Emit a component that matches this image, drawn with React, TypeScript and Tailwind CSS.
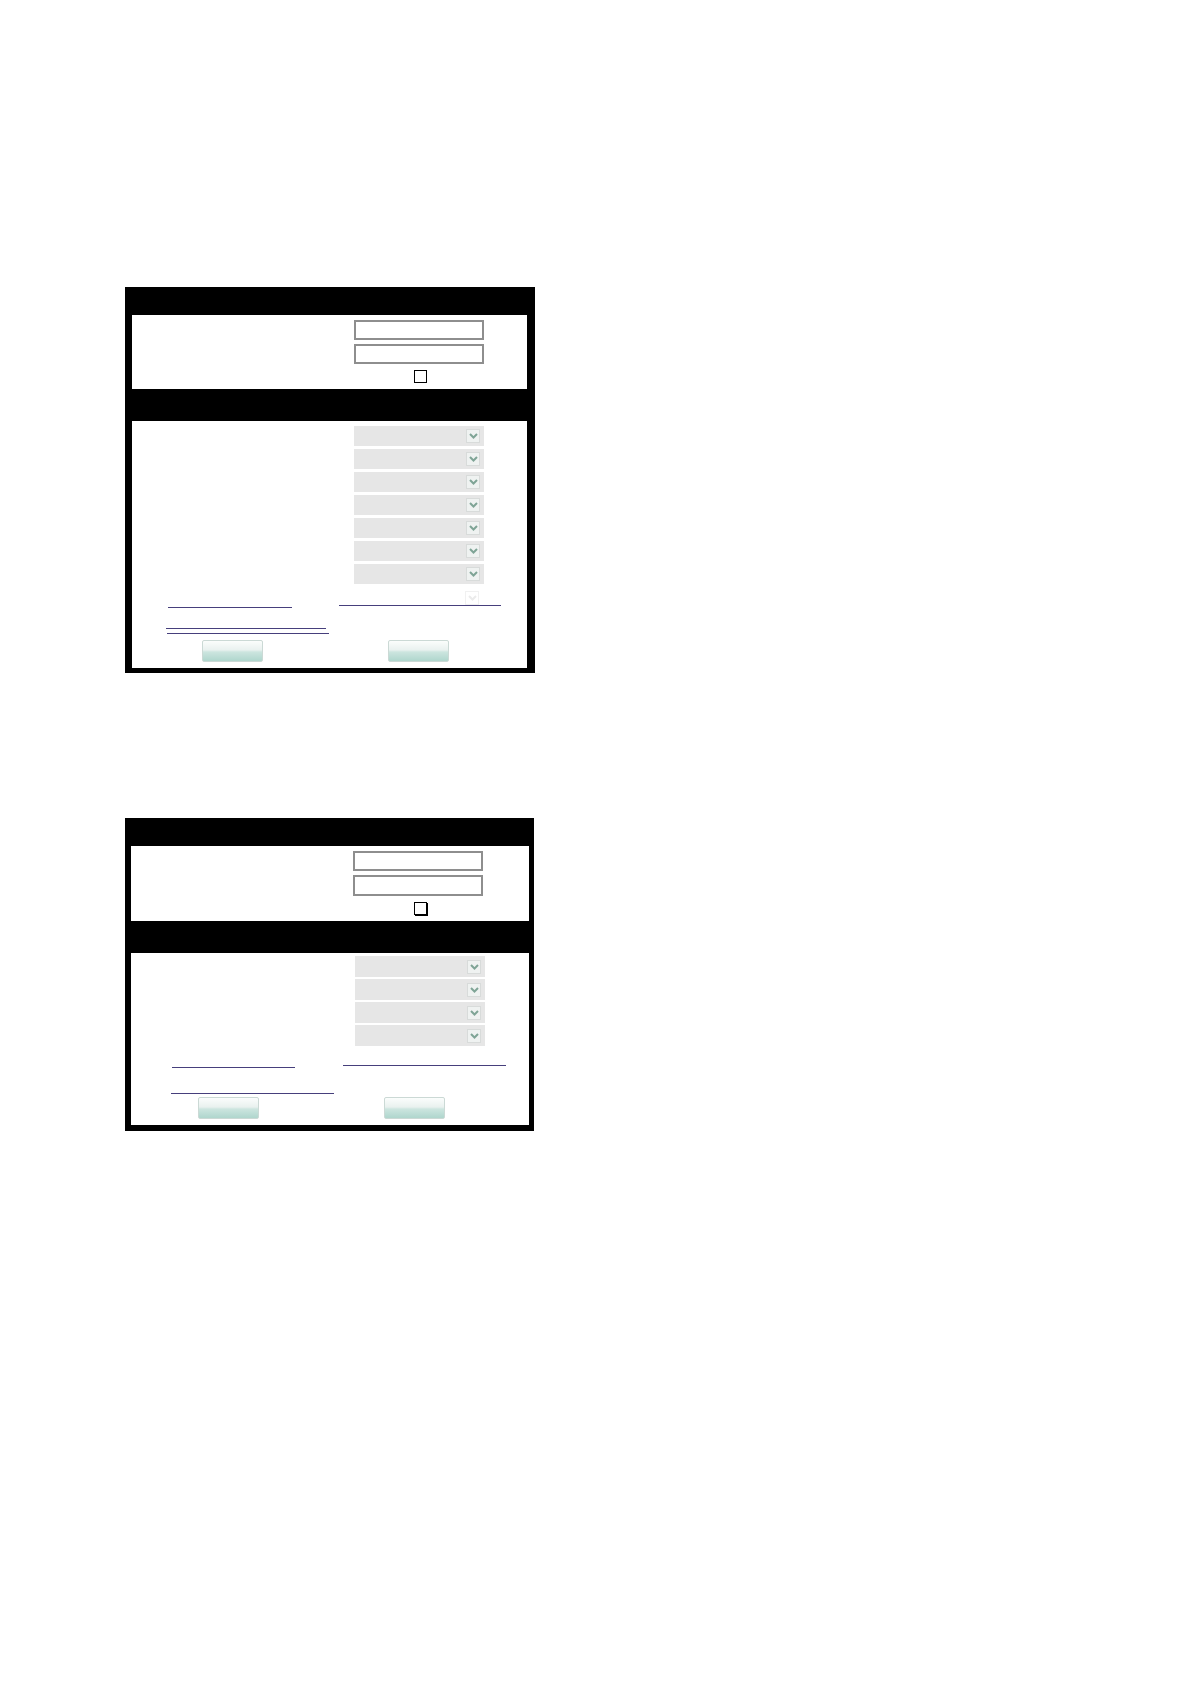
import React from 'react';

// Blank login / preferences form, drawn twice on a white page.
// Labels are empty in the source, so only the controls and link underlines show.

const TextBox: React.FC<{ tall?: boolean }> = ({ tall }) => (
  <div
    className={`w-[130px] ${tall ? 'h-[21px]' : 'h-[20px]'} border-2 border-[#8e8e8e] bg-white`}
  />
);

const Chevron: React.FC<{ faint?: boolean }> = ({ faint }) => (
  <div
    className={`flex h-[14px] w-[14px] items-center justify-center border ${
      faint ? 'border-[#f1f1f1] bg-white' : 'border-[#d8dbda] bg-[#eff2f1]'
    }`}
  >
    <svg width="9" height="6" viewBox="0 0 9 6">
      <path
        d="M1 1 L4.5 4.5 L8 1"
        fill="none"
        stroke={faint ? '#ebebeb' : '#7fa496'}
        strokeWidth="2"
      />
    </svg>
  </div>
);

const Select: React.FC<{ h: string }> = ({ h }) => (
  <div className={`flex w-[130px] ${h} items-center justify-end bg-[#e6e6e6] pr-[4px]`}>
    <Chevron />
  </div>
);

const Line: React.FC<{ w: string; className?: string }> = ({ w, className = '' }) => (
  <div className={`h-px ${w} bg-[#463f7c] ${className}`} />
);

const Button: React.FC = () => (
  <button
    type="button"
    className="h-[22px] w-[61px] rounded-[2px] border border-[#cbd9d5] bg-[linear-gradient(to_bottom,#fbfdfc_0%,#e9f1ef_45%,#cce5df_55%,#afd6cd_100%)]"
  />
);

const Header: React.FC<{ h: string }> = ({ h }) => <div className={`${h} bg-black`} />;

const FirstPanel: React.FC = () => (
  <div className="w-[410px] bg-black pl-[7px] pr-[8px] pb-[5px]">
    <Header h="h-[28px]" />
    <div className="flex flex-col bg-white pt-[5px] pb-[6px] pl-[222px]">
      <TextBox />
      <div className="mt-[4px]">
        <TextBox />
      </div>
      <div className="mt-[6px] ml-[60px] h-[13px] w-[13px] border border-black" />
    </div>
    <Header h="h-[32px]" />
    <div className="flex flex-col bg-white pt-[5px] pb-[6px]">
      <div className="flex flex-col gap-[3px] pl-[222px]">
        {Array.from({ length: 7 }).map((_, i) => (
          <Select key={i} h="h-[20px]" />
        ))}
      </div>
      <div className="mt-[7px] pl-[333px]">
        <Chevron faint />
      </div>
      <div className="flex items-start">
        <Line w="w-[124px]" className="mt-[2px] ml-[36px]" />
        <Line w="w-[162px]" className="ml-[47px]" />
      </div>
      <Line w="w-[160px]" className="mt-[20px] ml-[34px]" />
      <Line w="w-[162px]" className="mt-[4px] ml-[35px]" />
      <div className="mt-[6px] flex gap-[125px] pl-[70px]">
        <Button />
        <Button />
      </div>
    </div>
  </div>
);

const SecondPanel: React.FC = () => (
  <div className="w-[409px] bg-black pl-[6px] pr-[5px] pb-[6px]">
    <Header h="h-[28px]" />
    <div className="flex flex-col bg-white pt-[5px] pb-[6px] pl-[222px]">
      <TextBox />
      <div className="mt-[4px]">
        <TextBox tall />
      </div>
      <div className="mt-[6px] ml-[61px] h-[13px] w-[13px] border border-black shadow-[1px_1px_0_#000]" />
    </div>
    <Header h="h-[32px]" />
    <div className="flex flex-col bg-white pt-[3px] pb-[6px]">
      <div className="flex flex-col gap-[2px] pl-[224px]">
        {Array.from({ length: 4 }).map((_, i) => (
          <Select key={i} h="h-[21px]" />
        ))}
      </div>
      <div className="mt-[19px] flex items-start">
        <Line w="w-[123px]" className="mt-[2px] ml-[41px]" />
        <Line w="w-[163px]" className="ml-[48px]" />
      </div>
      <Line w="w-[163px]" className="mt-[25px] ml-[40px]" />
      <div className="mt-[3px] flex gap-[125px] pl-[67px]">
        <Button />
        <Button />
      </div>
    </div>
  </div>
);

const App: React.FC = () => (
  <div className="min-h-[1684px] bg-white pt-[287px] pl-[125px] font-['Liberation_Sans',sans-serif]">
    <FirstPanel />
    <div className="mt-[145px]">
      <SecondPanel />
    </div>
  </div>
);

export default App;
